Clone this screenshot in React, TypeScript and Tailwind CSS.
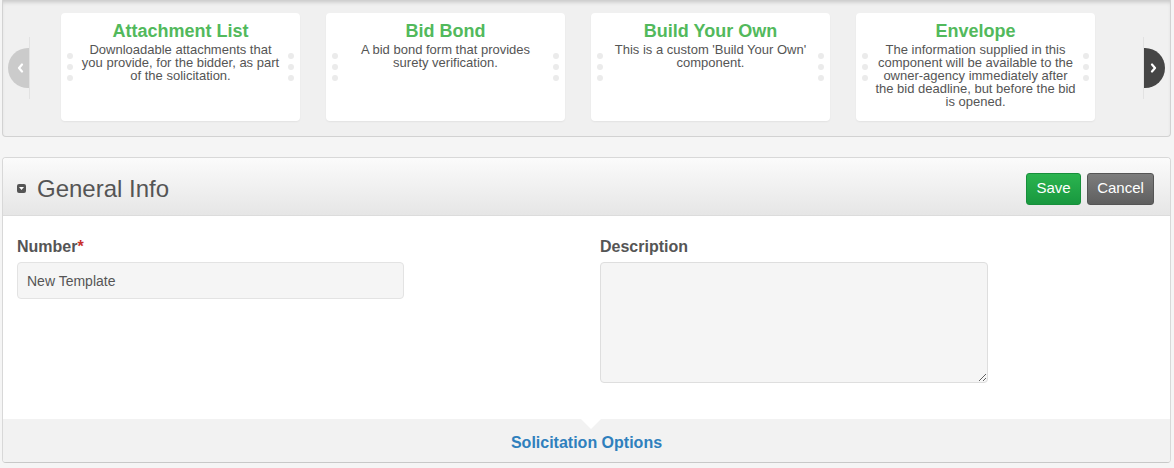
import React from 'react';

interface ComponentCard {
  id: string;
  title: string;
  description: string;
}

const cards: ComponentCard[] = [
  {
    id: 'attachment-list',
    title: 'Attachment List',
    description:
      'Downloadable attachments that you provide, for the bidder, as part of the solicitation.',
  },
  {
    id: 'bid-bond',
    title: 'Bid Bond',
    description: 'A bid bond form that provides surety verification.',
  },
  {
    id: 'build-your-own',
    title: 'Build Your Own',
    description: "This is a custom 'Build Your Own' component.",
  },
  {
    id: 'envelope',
    title: 'Envelope',
    description:
      'The information supplied in this component will be available to the owner-agency immediately after the bid deadline, but before the bid is opened.',
  },
];

function DragDots() {
  return (
    <div className="mt-[11px] flex w-[6px] shrink-0 flex-col gap-[5px]">
      <span className="h-[6px] w-[6px] rounded-full bg-[#ebebeb]" />
      <span className="h-[6px] w-[6px] rounded-full bg-[#ebebeb]" />
      <span className="h-[6px] w-[6px] rounded-full bg-[#ebebeb]" />
    </div>
  );
}

function Card({ card }: { card: ComponentCard }) {
  return (
    <div className="flex h-[108px] w-[239px] shrink-0 flex-col rounded-[4px] bg-white pt-[7px] shadow-[0_1px_2px_rgba(0,0,0,0.06)]">
      <h3 className="text-center text-[18px] font-bold leading-[22px] text-[#52b95c]">
        {card.title}
      </h3>
      <div className="flex px-[6px]">
        <DragDots />
        <p className="flex-1 px-[6px] pt-[1px] text-center text-[13px] leading-[13px] text-[#555]">
          {card.description}
        </p>
        <DragDots />
      </div>
    </div>
  );
}

function Chevron({ dir }: { dir: 'left' | 'right' }) {
  return (
    <svg width="7" height="10" viewBox="0 0 7 10" fill="none">
      <path
        d={dir === 'left' ? 'M5 1.5 L2 5 L5 8.5' : 'M2 1.5 L5 5 L2 8.5'}
        stroke="white"
        strokeWidth="2.2"
        strokeLinecap="round"
        strokeLinejoin="round"
      />
    </svg>
  );
}

export default function App() {
  return (
    <div
      className="h-[468px] w-[1174px] overflow-hidden bg-[#f5f5f5] pl-[2px] pr-[3px]"
      style={{ fontFamily: '"Liberation Sans", Arial, sans-serif' }}
    >
      {/* component carousel */}
      <div className="flex h-[137px] items-center rounded-b-[4px] border border-t-0 border-[#d2d2d2] bg-[#f0f0f0] shadow-[inset_0_4px_4px_-2px_rgba(0,0,0,0.18)]">
        <div className="flex h-[62px] w-[27px] shrink-0 items-center justify-end border-r border-[#e2e2e2] pl-[4px]">
          <button className="flex h-[40px] w-[21px] items-center justify-center rounded-l-full bg-[#cbcbcb] pl-[3px]">
            <Chevron dir="left" />
          </button>
        </div>
        <div className="flex flex-1 gap-[26px] pb-[2px] pl-[31px]">
          {cards.map((card) => (
            <Card key={card.id} card={card} />
          ))}
        </div>
        <div className="mr-[5px] flex h-[62px] w-[22px] shrink-0 items-center border-l border-[#e2e2e2]">
          <button className="flex h-[40px] w-[21px] items-center justify-center rounded-r-full bg-[#454545] pr-[3px]">
            <Chevron dir="right" />
          </button>
        </div>
      </div>

      {/* general info panel */}
      <div className="mt-[20px] overflow-hidden rounded-[4px] border border-[#d8d8d8] border-b-[#c8c8c8] bg-white">
        <div className="flex h-[58px] items-center justify-between border-b border-[#dcdcdc] bg-gradient-to-b from-[#fbfbfb] to-[#e6e6e6] pl-[14px] pr-[16px] pt-[4px]">
          <div className="flex items-center gap-[11px]">
            <span className="flex h-[9px] w-[9px] items-center justify-center rounded-[2px] bg-[#555]">
              <svg width="5" height="3" viewBox="0 0 5 3">
                <path d="M0 0 H5 L2.5 3 Z" fill="white" />
              </svg>
            </span>
            <h2 className="text-[24px] leading-none text-[#555]">General Info</h2>
          </div>
          <div className="flex gap-[6px]">
            <button className="h-[32px] w-[55px] rounded-[3px] border border-[#178f3b] bg-gradient-to-b from-[#2bb44f] to-[#18983f] text-[15px] text-white">
              Save
            </button>
            <button className="h-[32px] w-[67px] rounded-[3px] border border-[#555] bg-gradient-to-b from-[#7d7d7d] to-[#5f5f5f] text-[15px] text-white">
              Cancel
            </button>
          </div>
        </div>

        <div className="grid grid-cols-2 gap-[27px] px-[14px] pb-[36px] pt-[22px]">
          <div>
            <label className="block text-[16px] font-bold leading-[18px] text-[#555]">
              Number<span className="text-[#c9302c]">*</span>
            </label>
            <input
              defaultValue="New Template"
              className="mt-[6px] block h-[37px] w-[387px] rounded-[4px] border border-[#e3e3e3] bg-[#f5f5f5] px-[9px] text-[14px] text-[#555] outline-none"
            />
          </div>
          <div>
            <label className="block text-[16px] font-bold leading-[18px] text-[#555]">
              Description
            </label>
            <textarea className="mt-[6px] block h-[121px] w-[388px] rounded-[4px] border border-[#dedede] bg-[#f5f5f5] px-[9px] text-[14px] text-[#555] outline-none" />
          </div>
        </div>

        <div className="relative flex h-[43px] items-center justify-center bg-[#f2f2f2] pt-[5px]">
          <span className="absolute left-[578px] top-0 h-0 w-0 border-x-[10px] border-t-[10px] border-x-transparent border-t-white" />
          <span className="text-[16px] font-bold text-[#2f80bd]">Solicitation Options</span>
        </div>
      </div>
    </div>
  );
}
